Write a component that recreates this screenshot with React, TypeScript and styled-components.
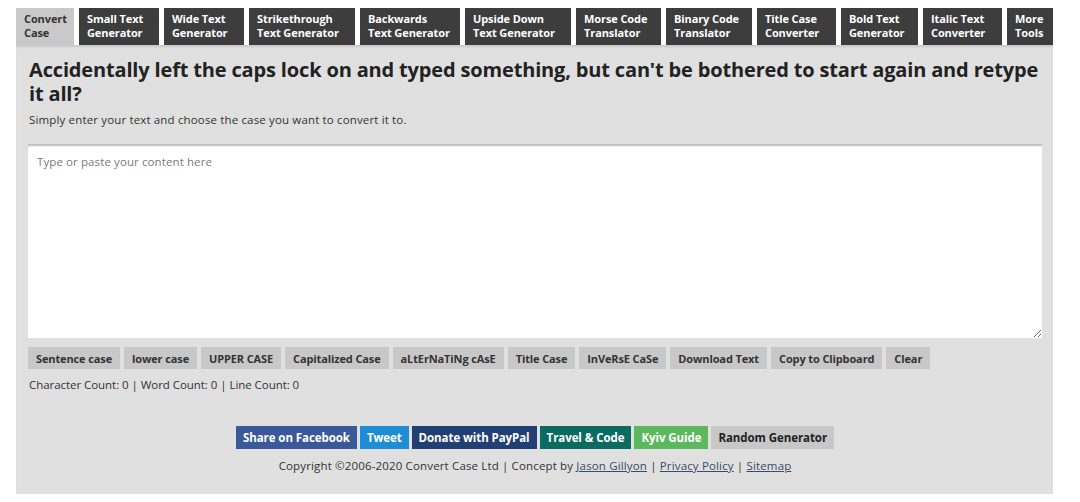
import React from "react";
import styled, { createGlobalStyle } from "styled-components";

const GlobalStyle = createGlobalStyle`
  body {
    margin: 8px;
    background: #ffffff;
    font-family: "Open Sans", "DejaVu Sans", sans-serif;
    color: #222;
  }
`;

const Page = styled.div`
  margin-left: 8px;
  width: 1037px;
`;

const TabBar = styled.nav`
  display: flex;
  gap: 5px;
`;

const Tab = styled.a<{ $w: number; $active?: boolean }>`
  flex: 0 1 ${(p) => p.$w}px;
  box-sizing: border-box;
  height: 37px;
  padding: 4px 7px 0 8px;
  font-size: 11px;
  line-height: 14px;
  font-weight: 700;
  letter-spacing: -0.1px;
  text-decoration: none;
  color: ${(p) => (p.$active ? "#333" : "#fff")};
  background: ${(p) => (p.$active ? "#c9c9c9" : "#3d3d3d")};
  white-space: nowrap;
  overflow: hidden;
`;

const Main = styled.main`
  background: #e0e0e0;
  padding: 13px 11px 21px 12px;
  box-shadow: inset 0 3px 2px -1px #c9c9c9;
`;

const Heading = styled.h1`
  margin: 0;
  padding-left: 1px;
  font-size: 20px;
  line-height: 24px;
  font-weight: 700;
  color: #222;
  letter-spacing: -0.16px;
`;

const Lead = styled.p`
  margin: 6px 0 0 1px;
  font-size: 11.5px;
  line-height: 15px;
  color: #333;
  letter-spacing: 0.15px;
`;

const Editor = styled.textarea`
  display: block;
  box-sizing: border-box;
  margin-top: 17px;
  width: 100%;
  height: 194px;
  padding: 10px 9px;
  border: none;
  outline: none;
  background: #fff;
  box-shadow: inset 0 3px 2px -1px #bdbdbd;
  font-family: "Open Sans", "DejaVu Sans", sans-serif;
  font-size: 11.5px;
  line-height: 15px;
  letter-spacing: 0.1px;
  color: #333;
  resize: vertical;
  &::placeholder {
    color: #7a7a7a;
  }
`;

const ButtonRow = styled.div`
  display: flex;
  gap: 4px;
  margin-top: 9px;
`;

const CaseButton = styled.button`
  height: 22px;
  padding: 0 8px;
  border: none;
  background: #c8c8c8;
  font-family: "Open Sans", "DejaVu Sans", sans-serif;
  font-size: 11px;
  font-weight: 700;
  letter-spacing: -0.12px;
  color: #333;
  cursor: pointer;
`;

const Counts = styled.p`
  margin: 8px 0 0 1px;
  font-size: 11.5px;
  line-height: 15px;
  color: #333;
  letter-spacing: -0.05px;
`;

const ShareRow = styled.div`
  display: flex;
  justify-content: center;
  gap: 3px;
  margin-top: 34px;
`;

const ShareButton = styled.a<{ $bg: string; $fg?: string }>`
  display: flex;
  align-items: center;
  height: 23px;
  padding: 0 7px;
  background: ${(p) => p.$bg};
  color: ${(p) => p.$fg ?? "#fff"};
  font-size: 11.5px;
  font-weight: 700;
  letter-spacing: -0.07px;
  text-decoration: none;
  white-space: nowrap;
`;

const Copyright = styled.p`
  margin: 9px 0 0;
  text-align: center;
  font-size: 11.5px;
  line-height: 15px;
  color: #333;
  letter-spacing: 0.15px;
`;

const FooterLink = styled.a`
  color: #3b4a66;
  text-decoration: underline;
`;

const tabs: { label: string[]; w: number; active?: boolean }[] = [
  { label: ["Convert", "Case"], w: 58, active: true },
  { label: ["Small Text", "Generator"], w: 80 },
  { label: ["Wide Text", "Generator"], w: 80 },
  { label: ["Strikethrough", "Text Generator"], w: 106 },
  { label: ["Backwards", "Text Generator"], w: 100 },
  { label: ["Upside Down", "Text Generator"], w: 106 },
  { label: ["Morse Code", "Translator"], w: 85 },
  { label: ["Binary Code", "Translator"], w: 86 },
  { label: ["Title Case", "Converter"], w: 79 },
  { label: ["Bold Text", "Generator"], w: 77 },
  { label: ["Italic Text", "Converter"], w: 79 },
  { label: ["More", "Tools"], w: 46 },
];

const caseButtons = [
  "Sentence case",
  "lower case",
  "UPPER CASE",
  "Capitalized Case",
  "aLtErNaTiNg cAsE",
  "Title Case",
  "InVeRsE CaSe",
  "Download Text",
  "Copy to Clipboard",
  "Clear",
];

const shares: { label: string; bg: string; fg?: string }[] = [
  { label: "Share on Facebook", bg: "#3b5998" },
  { label: "Tweet", bg: "#1d8dd6" },
  { label: "Donate with PayPal", bg: "#213f73" },
  { label: "Travel & Code", bg: "#0b6b61" },
  { label: "Kyiv Guide", bg: "#5cb85c" },
  { label: "Random Generator", bg: "#c8c8c8", fg: "#222" },
];

export default function App() {
  return (
    <>
      <GlobalStyle />
      <Page>
        <TabBar>
          {tabs.map((t) => (
            <Tab key={t.label.join(" ")} $w={t.w} $active={t.active} href="#">
              {t.label[0]}
              <br />
              {t.label[1]}
            </Tab>
          ))}
        </TabBar>
        <Main>
          <Heading>
            Accidentally left the caps lock on and typed something, but can't be bothered to start again and retype it all?
          </Heading>
          <Lead>Simply enter your text and choose the case you want to convert it to.</Lead>
          <Editor placeholder="Type or paste your content here" />
          <ButtonRow>
            {caseButtons.map((b) => (
              <CaseButton key={b}>{b}</CaseButton>
            ))}
          </ButtonRow>
          <Counts>Character Count: 0 | Word Count: 0 | Line Count: 0</Counts>
          <ShareRow>
            {shares.map((s) => (
              <ShareButton key={s.label} $bg={s.bg} $fg={s.fg} href="#">
                {s.label}
              </ShareButton>
            ))}
          </ShareRow>
          <Copyright>
            Copyright ©2006-2020 Convert Case Ltd | Concept by <FooterLink href="#">Jason Gillyon</FooterLink> |{" "}
            <FooterLink href="#">Privacy Policy</FooterLink> | <FooterLink href="#">Sitemap</FooterLink>
          </Copyright>
        </Main>
      </Page>
    </>
  );
}
